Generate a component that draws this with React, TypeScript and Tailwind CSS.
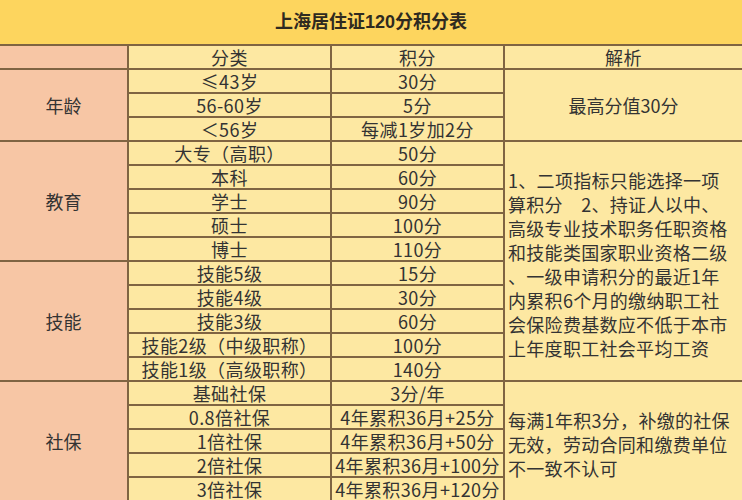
import React from 'react';

const groups = [
    {
        name: '年龄',
        rows: [
            ['≤43岁', '30分'],
            ['56-60岁', '5分'],
            ['＜56岁', '每减1岁加2分'],
        ],
        note: ['最高分值30分'],
        noteSpan: 3,
        noteCenter: true,
    },
    {
        name: '教育',
        rows: [
            ['大专（高职）', '50分'],
            ['本科', '60分'],
            ['学士', '90分'],
            ['硕士', '100分'],
            ['博士', '110分'],
        ],
        note: [
            '1、二项指标只能选择一项',
            '算积分　2、持证人以中、',
            '高级专业技术职务任职资格',
            '和技能类国家职业资格二级',
            '、一级申请积分的最近1年',
            '内累积6个月的缴纳职工社',
            '会保险费基数应不低于本市',
            '上年度职工社会平均工资',
        ],
        noteSpan: 10,
        noteCenter: false,
    },
    {
        name: '技能',
        rows: [
            ['技能5级', '15分'],
            ['技能4级', '30分'],
            ['技能3级', '60分'],
            ['技能2级（中级职称）', '100分'],
            ['技能1级（高级职称）', '140分'],
        ],
        note: null,
        noteSpan: 0,
        noteCenter: false,
    },
    {
        name: '社保',
        rows: [
            ['基础社保', '3分/年'],
            ['0.8倍社保', '4年累积36月+25分'],
            ['1倍社保', '4年累积36月+50分'],
            ['2倍社保', '4年累积36月+100分'],
            ['3倍社保', '4年累积36月+120分'],
        ],
        note: [
            '每满1年积3分，补缴的社保',
            '无效，劳动合同和缴费单位',
            '不一致不认可',
        ],
        noteSpan: 5,
        noteCenter: false,
    },
];

const cell = 'bg-[#fde8a2] flex items-center justify-center whitespace-nowrap leading-[22px] tracking-[0.4px]';

const App = () => {
    return (
        <div
            className="w-[742px] h-[500px] overflow-hidden bg-[#fde8a2] text-[#333333]"
            style={{ fontFamily: '"Noto Sans CJK SC", "Noto Sans", sans-serif' }}
        >
            <div
                className="h-[44px] bg-[#fdd55e] flex items-center justify-center text-[18px] font-bold text-[#2f2a20]"
                style={{ fontFamily: '"Liberation Sans", "Noto Sans CJK SC", sans-serif' }}
            >
                上海居住证120分积分表
            </div>
            <div className="grid grid-cols-[127px_201px_171px_237px] grid-rows-[repeat(19,22px)] gap-[2px] bg-[#7f6442] border-t-2 border-[#7f6442] text-[18px]">
                <div className="bg-[#f7c6a5]" />
                <div className={cell}>分类</div>
                <div className={cell}>积分</div>
                <div className={cell}>解析</div>

                {groups.map((g) =>
                    g.rows.map((r, i) => (
                        <React.Fragment key={g.name + i}>
                            {i === 0 && (
                                <div
                                    className="bg-[#f7c6a5] flex items-center justify-center"
                                    style={{ gridRow: `span ${g.rows.length}` }}
                                >
                                    {g.name}
                                </div>
                            )}
                            <div className={cell}>{r[0]}</div>
                            <div className={cell}>{r[1]}</div>
                            {i === 0 && g.note && (
                                <div
                                    className={
                                        g.noteCenter
                                            ? 'bg-[#fde8a2] flex items-center justify-center'
                                            : 'bg-[#fde8a2] flex flex-col justify-center pl-[3px] pt-[6px] leading-[24px] tracking-[0.3px] whitespace-nowrap'
                                    }
                                    style={{ gridRow: `span ${g.noteSpan}` }}
                                >
                                    {g.note.map((line) => (
                                        <div key={line}>{line}</div>
                                    ))}
                                </div>
                            )}
                        </React.Fragment>
                    ))
                )}
            </div>
        </div>
    );
};

export default App;
